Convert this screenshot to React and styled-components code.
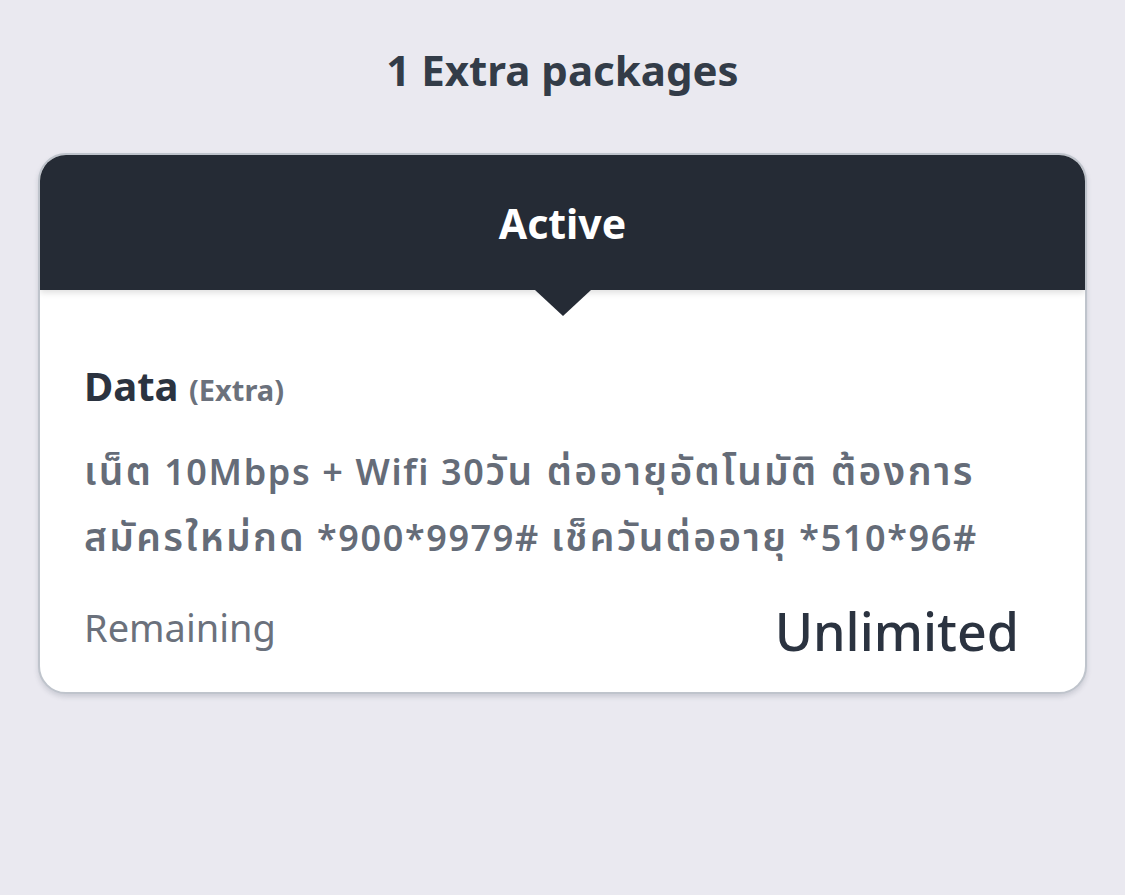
import React from "react";
import styled, { createGlobalStyle } from "styled-components";

const GlobalStyle = createGlobalStyle`
  body {
    margin: 0;
    background: #eae9f0;
    font-family: "Noto Sans", "Noto Sans Thai", "Open Sans", sans-serif;
  }
`;

export default function App() {
  return (
    <Page>
      <GlobalStyle />
      <Title>1 Extra packages</Title>
      <Card>
        <CardHeader>
          <Status>Active</Status>
          <Pointer />
        </CardHeader>
        <CardBody>
          <PackageName>
            Data <small>(Extra)</small>
          </PackageName>
          <Description>
            <Thai>เน็ต</Thai> 10Mbps + Wifi 30<Thai>วัน ต่ออายุอัตโนมัติ ต้องการ</Thai>
            <br />
            <Thai>สมัครใหม่กด</Thai> *900*9979# <Thai>เช็ควันต่ออายุ</Thai> *510*96#
          </Description>
          <RemainingRow>
            <Label>Remaining</Label>
            <Amount>Unlimited</Amount>
          </RemainingRow>
        </CardBody>
      </Card>
    </Page>
  );
}

const Page = styled.div`
  width: 1125px;
  min-height: 895px;
  padding: 41px 38px 0;
  box-sizing: border-box;
`;

const Title = styled.h1`
  margin: 0 0 54px;
  text-align: center;
  font-size: 42px;
  line-height: 58px;
  font-weight: 700;
  color: #333c48;
`;

const Card = styled.div`
  background: #fff;
  border: 2px solid #bfc4cc;
  border-radius: 28px;
  box-shadow: 0 3px 5px rgba(60, 70, 90, 0.18);
  overflow: hidden;
`;

const CardHeader = styled.div`
  position: relative;
  height: 135px;
  background: #252b35;
  display: flex;
  align-items: center;
  justify-content: center;
  box-shadow: 0 3px 6px rgba(0, 0, 0, 0.12);
`;

const Status = styled.span`
  color: #fff;
  font-size: 41px;
  font-weight: 700;
`;

const Pointer = styled.div`
  position: absolute;
  left: 50%;
  bottom: -26px;
  width: 0;
  height: 0;
  transform: translateX(-50%);
  border-left: 28px solid transparent;
  border-right: 28px solid transparent;
  border-top: 26px solid #252b35;
`;

const CardBody = styled.div`
  padding: 70px 66px 26px 44px;
`;

const PackageName = styled.div`
  font-size: 40px;
  font-weight: 700;
  color: #2b3340;
  line-height: 52px;

  small {
    font-size: 29px;
    color: #6b717c;
  }
`;

const Description = styled.p`
  margin: 23px 0 24px;
  font-size: 36px;
  line-height: 66px;
  font-weight: 600;
  letter-spacing: 0.045em;
  color: #656c78;
  white-space: nowrap;
`;

const Thai = styled.span`
  font-family: "Noto Sans Thai", "Noto Sans", sans-serif;
  font-size: 1.08em;
  letter-spacing: 0.06em;
  line-height: 1;
`;

const RemainingRow = styled.div`
  display: flex;
  justify-content: space-between;
  align-items: flex-start;
`;

const Label = styled.span`
  margin-top: 6px;
  font-size: 38px;
  color: #6b717c;
`;

const Amount = styled.span`
  font-size: 52px;
  font-weight: 500;
  color: #2b3340;
`;
